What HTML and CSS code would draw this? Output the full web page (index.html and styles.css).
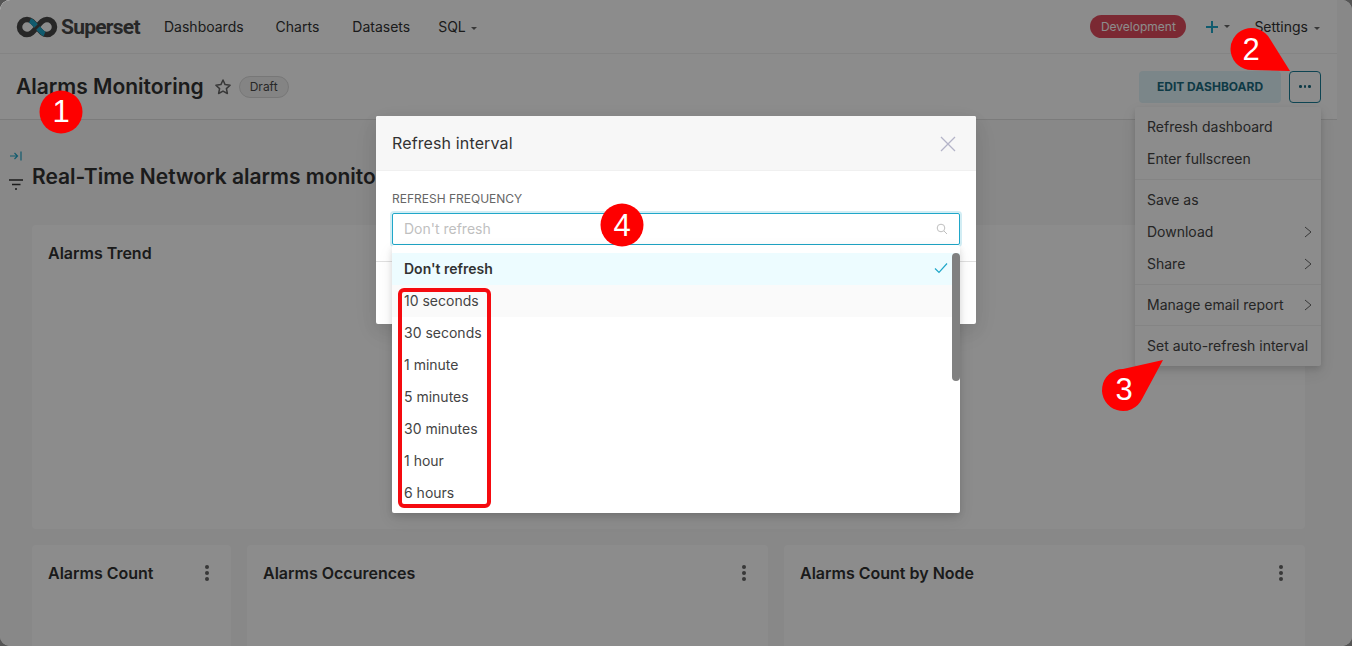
FILE: index.html
```html
<!DOCTYPE html>
<html lang="en">
<head>
    <meta charset="UTF-8">
    <meta name="viewport" content="width=device-width, initial-scale=1.0">
    <title>Alarms Monitoring</title>
    <link rel="stylesheet" href="styles.css">
</head>
<body>
    <div class="app">
        <nav class="navbar">
            <a class="brand">
                <svg class="brand-logo" width="42" height="22" viewBox="15 13 42 22" fill="none">
                    <path d="M36 24C32 19 30 16.5 26 16.5A7.5 7.5 0 0 0 26 31.5C30 31.5 32 29 36 24C40 19 42 16.5 46 16.5A7.5 7.5 0 0 1 46 31.5C42 31.5 40 29 36 24Z" stroke="#484848" stroke-width="5.500"/>
                    <path d="M29 17.5C31.500 18.500 33 21 35 23M37 25C39 27 41 30 43.500 31" stroke="#20a7c9" stroke-width="5"/>
                </svg>
                <span class="brand-name">Superset</span>
            </a>
            <ul class="nav-links">
                <li>Dashboards</li>
                <li>Charts</li>
                <li class="nav-datasets">Datasets</li>
                <li class="nav-sql">SQL<i class="caret"></i></li>
            </ul>
            <div class="nav-right">
                <span class="env-tag">Development</span>
                <span class="nav-plus">
                    <svg width="14" height="14" viewBox="0 0 14 14"><path d="M7 1v12M1 7h12" stroke="#20a7c9" stroke-width="2"/></svg>
                    <i class="caret"></i>
                </span>
                <span class="nav-settings">Settings<i class="caret"></i></span>
            </div>
        </nav>

        <header class="titlebar">
            <h1 class="dash-title">Alarms Monitoring</h1>
            <svg class="star" width="18" height="18" viewBox="0 0 18 18" fill="none">
                <path d="M9 2l2.100 4.600 5 .6-3.700 3.400 1 4.900L9 13.100 4.600 15.500l1-4.900L1.900 7.200l5-.6z" stroke="#666" stroke-width="1.500" stroke-linejoin="round"/>
            </svg>
            <span class="draft-tag">Draft</span>
            <div class="title-actions">
                <button class="btn-edit">Edit dashboard</button>
                <button class="btn-more"><i></i><i></i><i></i></button>
            </div>
        </header>

        <div class="dash">
            <aside class="rail">
                <svg width="12" height="10" viewBox="0 0 12 10" fill="none">
                    <path d="M0 5h7.500M4.500 2L7.500 5 4.500 8M11 .5v9" stroke="#20a7c9" stroke-width="1.200"/>
                </svg>
                <svg class="rail-filter" width="14" height="11" viewBox="0 0 14 11" fill="none">
                    <path d="M0 1h14M3 5.500h8.500M6 10h2" stroke="#323232" stroke-width="1.500"/>
                </svg>
            </aside>
            <main class="dash-main">
                <h2 class="dash-heading">Real-Time Network alarms monitoring</h2>
                <section class="card card-wide">
                    <h3>Alarms Trend</h3>
                </section>
                <div class="card-row">
                    <section class="card">
                        <h3>Alarms Count</h3>
                        <span class="kebab"><i></i><i></i><i></i></span>
                    </section>
                    <section class="card">
                        <h3>Alarms Occurences</h3>
                        <span class="kebab"><i></i><i></i><i></i></span>
                    </section>
                    <section class="card">
                        <h3>Alarms Count by Node</h3>
                        <span class="kebab"><i></i><i></i><i></i></span>
                    </section>
                </div>
            </main>
        </div>

        <ul class="more-menu">
            <li>Refresh dashboard</li>
            <li>Enter fullscreen</li>
            <li class="divider"></li>
            <li>Save as</li>
            <li>Download<svg class="chev" width="8" height="12" viewBox="0 0 8 12" fill="none"><path d="M1 1l6 5-6 5" stroke="#666"/></svg></li>
            <li>Share<svg class="chev" width="8" height="12" viewBox="0 0 8 12" fill="none"><path d="M1 1l6 5-6 5" stroke="#666"/></svg></li>
            <li class="divider"></li>
            <li>Manage email report<svg class="chev" width="8" height="12" viewBox="0 0 8 12" fill="none"><path d="M1 1l6 5-6 5" stroke="#666"/></svg></li>
            <li class="divider"></li>
            <li>Set auto-refresh interval</li>
        </ul>

        <div class="mask"></div>

        <div class="modal">
            <div class="modal-head">
                <span class="modal-title">Refresh interval</span>
                <svg class="modal-close" width="16" height="16" viewBox="0 0 16 16" fill="none"><path d="M1 1l14 14M15 1L1 15" stroke="#b4b4c8" stroke-width="1.300"/></svg>
            </div>
            <div class="modal-body">
                <label class="field-label">Refresh frequency</label>
                <div class="select-box">
                    <span>Don't refresh</span>
                    <svg width="12" height="12" viewBox="0 0 12 12" fill="none"><circle cx="5" cy="5" r="3.800" stroke="#bfbfbf"/><path d="M8 8l3 3" stroke="#bfbfbf"/></svg>
                </div>
            </div>
            <div class="modal-foot"></div>

            <div class="dropdown">
                <ul>
                    <li class="is-selected">Don't refresh
                        <svg width="14" height="12" viewBox="0 0 14 12" fill="none"><path d="M1 6.500L5 10.500 13 1.500" stroke="#20a7c9" stroke-width="1.200"/></svg>
                    </li>
                    <li class="is-hover">10 seconds</li>
                    <li>30 seconds</li>
                    <li>1 minute</li>
                    <li>5 minutes</li>
                    <li>30 minutes</li>
                    <li>1 hour</li>
                    <li>6 hours</li>
                </ul>
                <div class="scroll-thumb"></div>
            </div>
        </div>

        <!-- annotations drawn on top of the screenshot -->
        <div class="mark-box"></div>
        <svg class="marks" width="1352" height="646" viewBox="0 0 1352 646">
            <circle cx="61" cy="112" r="21.500" fill="#fe0000"/>
            <text x="61" y="122">1</text>
            <path d="M1290 71L1252 70A21 21 0 1 1 1270 39Z" fill="#fe0000"/>
            <text x="1251" y="60">2</text>
            <path d="M1163 360L1142 399A21 21 0 1 1 1123 369Z" fill="#fe0000"/>
            <text x="1124" y="400">3</text>
            <circle cx="622" cy="225" r="21.500" fill="#fe0000"/>
            <text x="622" y="236">4</text>
        </svg>
    </div>
</body>
</html>
```

FILE: styles.css
```css
* {
    box-sizing: border-box;
}

html, body {
    margin: 0;
    height: 100%;
    overflow: hidden;
}

body {
    font-family: Inter, "Liberation Sans", sans-serif;
    font-size: 14px;
    color: #323232;
    background-color: #555;
}

.app {
    position: relative;
    width: 1352px;
    height: 646px;
    overflow: hidden;
    background-color: #f7f7f7;
    border-radius: 10px;
}

/* top nav */
.navbar {
    display: flex;
    align-items: center;
    width: 1337px;
    height: 54px;
    padding: 0 17px 0 16px;
    background-color: #fff;
    border-bottom: 1px solid #f0f0f0;
}

.brand {
    display: flex;
    align-items: center;
    gap: 3px;
    width: 148px;
}

.brand-name {
    font-family: Roboto, sans-serif;
    font-size: 21px;
    font-weight: 700;
    letter-spacing: -0.75px;
    color: #484848;
}

.nav-links {
    display: flex;
    gap: 32px;
    margin: 0;
    padding: 0;
    list-style: none;
}

.nav-datasets {
    margin-left: 1px;
}

.nav-sql {
    margin-left: -4px;
}

.caret {
    display: inline-block;
    margin-left: 5px;
    vertical-align: middle;
    border: 3px solid transparent;
    border-top: 3.500px solid #666;
    border-bottom: 0;
}

.nav-right {
    display: flex;
    align-items: center;
    margin-left: auto;
}

.env-tag {
    width: 96px;
    height: 23px;
    line-height: 23px;
    text-align: center;
    font-size: 12px;
    color: #fff;
    background-color: #e04355;
    border-radius: 12px;
    opacity: .95;
}

.nav-plus {
    display: flex;
    align-items: center;
    margin-left: 19px;
}

.nav-plus .caret {
    margin-left: 5px;
}

.nav-settings {
    margin-left: 24px;
}

.nav-settings .caret {
    margin-left: 6px;
}

/* title row */
.titlebar {
    display: flex;
    align-items: center;
    width: 1337px;
    height: 66px;
    padding: 0 16px;
    background-color: #fff;
    border-bottom: 1px solid #e0e0e0;
}

.dash-title {
    margin: 0;
    font-size: 21px;
    font-weight: 600;
}

.star {
    margin-left: 10px;
}

.draft-tag {
    margin-left: 7px;
    width: 50px;
    height: 22px;
    line-height: 20px;
    text-align: center;
    font-size: 12px;
    color: #494949;
    background-color: #f0f0f0;
    border: 1px solid #d9d9d9;
    border-radius: 11px;
}

.title-actions {
    display: flex;
    gap: 8px;
    margin-left: auto;
}

.btn-edit {
    width: 142px;
    height: 32px;
    padding: 0;
    font: 700 12px Inter, sans-serif;
    text-transform: uppercase;
    color: #1a6b80;
    background-color: #e1f4f9;
    border: 0;
    border-radius: 4px;
}

.btn-more {
    display: flex;
    align-items: center;
    justify-content: center;
    gap: 2px;
    width: 32px;
    height: 32px;
    padding: 0;
    background-color: #fff;
    border: 1px solid #1a7d96;
    border-radius: 4px;
}

.btn-more i {
    width: 2.500px;
    height: 2.500px;
    background-color: #1a6b80;
    border-radius: 50%;
}

/* dashboard */
.dash {
    display: flex;
}

.rail {
    display: flex;
    flex-direction: column;
    flex: 0 0 32px;
    padding: 31px 0 0 10px;
}

.rail-filter {
    margin: 18px 0 0 -1px;
}

.dash-main {
    width: 1273px;
}

.dash-heading {
    margin: 43px 0 34px;
    height: 28px;
    line-height: 28px;
    font-size: 21px;
    font-weight: 600;
    white-space: nowrap;
}

.card {
    position: relative;
    padding: 16px;
    background-color: #fff;
    border-radius: 4px;
}

.card h3 {
    margin: 0;
    line-height: 24px;
    font-size: 16px;
    font-weight: 600;
}

.card-wide {
    height: 304px;
}

.card-row {
    display: grid;
    grid-template-columns: 199px 521px 521px;
    gap: 16px;
    margin-top: 16px;
}

.card-row .card {
    display: flex;
    justify-content: space-between;
    height: 120px;
}

.kebab {
    display: flex;
    flex-direction: column;
    gap: 2px;
    padding: 4px 6px 0 0;
}

.kebab i {
    width: 4px;
    height: 4px;
    background-color: #666;
    border-radius: 50%;
}

/* open actions menu */
.more-menu {
    position: absolute;
    top: 107px;
    left: 1135px;
    width: 186px;
    margin: 0;
    padding: 4px 0;
    list-style: none;
    color: #444;
    background-color: #fff;
    border-radius: 2px;
    box-shadow: 0 3px 6px rgba(0, 0, 0, 0.12), 0 6px 16px rgba(0, 0, 0, 0.08);
}

.more-menu li {
    display: flex;
    align-items: center;
    justify-content: space-between;
    height: 32px;
    padding: 0 9px 2px 12px;
    white-space: nowrap;
}

.more-menu li.divider {
    height: 1px;
    margin: 4px 0;
    padding: 0;
    background-color: #f0f0f0;
}

.more-menu .chev {
    margin-top: 2px;
}

.mask {
    position: absolute;
    inset: 0;
    background-color: rgba(0, 0, 0, 0.45);
}

/* refresh modal */
.modal {
    position: absolute;
    top: 116px;
    left: 376px;
    width: 600px;
    height: 208px;
    background-color: #fff;
    border-radius: 2px;
    box-shadow: 0 6px 16px rgba(0, 0, 0, 0.08), 0 9px 28px rgba(0, 0, 0, 0.05);
}

.modal-head {
    display: flex;
    align-items: center;
    justify-content: space-between;
    height: 55px;
    padding: 0 20px 0 16px;
    font-size: 16px;
    background-color: #f7f7f7;
    border-bottom: 1px solid #f0f0f0;
    border-radius: 2px 2px 0 0;
}

.modal-title {
    letter-spacing: .13px;
}

.modal-close {
    margin-top: 2px;
}

.modal-body {
    height: 90px;
    padding: 21px 16px 0;
}

.field-label {
    display: block;
    height: 21px;
    line-height: 14px;
    font-size: 12px;
    text-transform: uppercase;
    color: #666;
}

.select-box {
    display: flex;
    align-items: center;
    justify-content: space-between;
    height: 32px;
    padding: 0 11px 2px;
    color: #bfbfbf;
    border: 1px solid #20a7c9;
    border-radius: 2px;
    box-shadow: 0 0 0 2px rgba(32, 167, 201, 0.2);
}

.select-box svg {
    margin-top: 2px;
}

.modal-foot {
    border-top: 1px solid #e0e0e0;
}

.dropdown {
    position: absolute;
    top: 129px;
    left: 16px;
    width: 568px;
    height: 268px;
    padding-top: 8px;
    overflow: hidden;
    color: #444;
    background-color: #fff;
    border-radius: 2px;
    box-shadow: 0 3px 6px rgba(0, 0, 0, 0.12), 0 6px 16px rgba(0, 0, 0, 0.08);
}

.dropdown ul {
    margin: 0;
    padding: 0;
    list-style: none;
}

.dropdown li {
    display: flex;
    align-items: center;
    justify-content: space-between;
    height: 32px;
    padding: 0 12px 2px;
}

.dropdown li.is-selected {
    font-weight: 600;
    color: #323232;
    background-color: #edfcff;
}

.dropdown li.is-hover {
    background-color: #fafafa;
}

.scroll-thumb {
    position: absolute;
    top: 8px;
    right: 0;
    width: 8px;
    height: 128px;
    background-color: #808080;
    border-radius: 4px;
}

/* red marks */
.mark-box {
    position: absolute;
    top: 288px;
    left: 398px;
    width: 93px;
    height: 220px;
    border: 4px solid #f50a0f;
    border-radius: 6px;
}

.marks {
    position: absolute;
    top: 0;
    left: 0;
}

.marks text {
    font-family: "Liberation Sans", sans-serif;
    font-size: 31px;
    fill: #fff;
    text-anchor: middle;
}
```
